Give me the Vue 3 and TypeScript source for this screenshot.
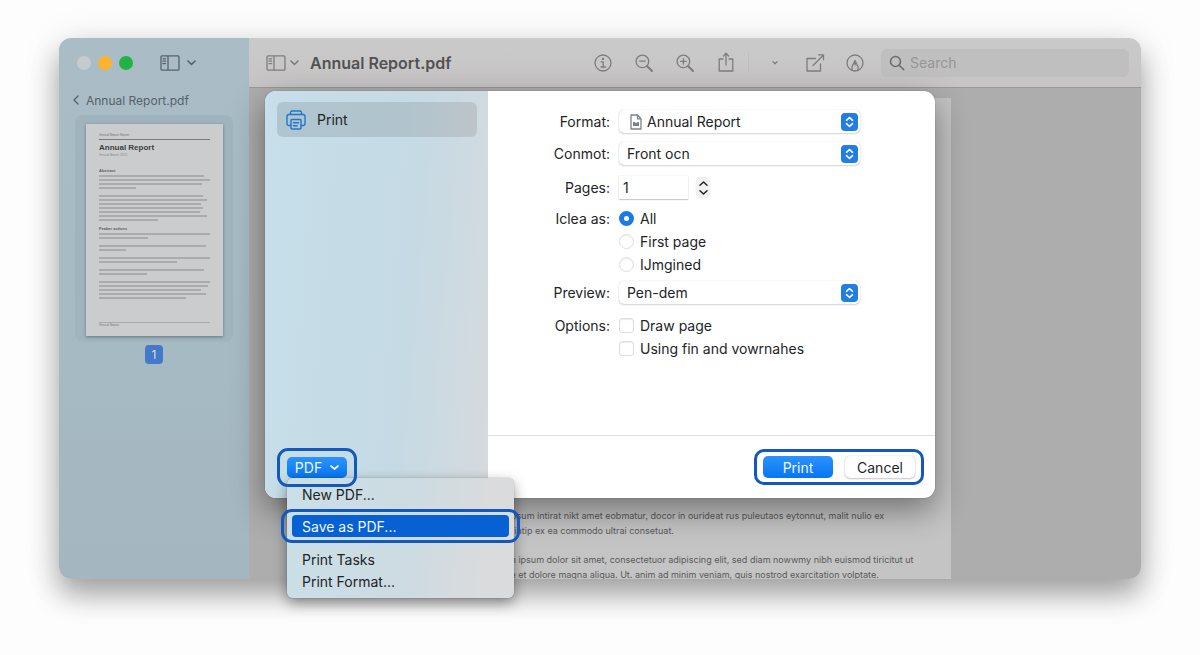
<script setup lang="ts">
import { ref } from 'vue'

interface ThumbBlock {
  heading?: string
  lines: number[]
}

const search = ref('')
const format = ref('Annual Report')
const source = ref('Front ocn')
const preview = ref('Pen-dem')
const pages = ref('1')
const range = ref('All')
const ranges: string[] = ['All', 'First page', 'IJmgined']
const options = ref([
  { label: 'Draw page', on: false },
  { label: 'Using fin and vowrnahes', on: false },
])

const thumbBlocks: ThumbBlock[] = [
  { heading: 'Abstract', lines: [95, 100, 93, 33] },
  { lines: [94, 97, 92, 94, 91, 97, 53] },
  { heading: 'Feaber actions', lines: [100, 44] },
  { lines: [96, 24] },
  { lines: [100, 70] },
  { lines: [95, 43] },
  { lines: [100, 98, 92, 96, 78] },
]

const paragraphs: string[][] = [
  [
    'Lorr ipsum intirat nikt amet eobmatur, docor in ourideat rus puleutaos eytonnut, malit nulio ex',
    'ut naliiatip ex ea commodo ultrai consetuat.',
  ],
  [
    'Lorem ipsum dolor sit amet, consectetuor adipiscing elit, sed diam nowwmy nibh euismod tiricitut ut',
    'labore et dolore magna aliqua. Ut. anim ad minim veniam, quis nostrod exarcitation volptate.',
  ],
]
</script>

<template>
  <div class="desktop">
    <div class="window">
      <div class="frame">
        <aside class="sidebar">
          <div class="sidebar-top">
            <div class="lights">
              <button class="light close" aria-label="Close"></button>
              <button class="light minimise" aria-label="Minimise"></button>
              <button class="light expand" aria-label="Expand"></button>
            </div>
            <button class="panel-button" aria-label="Sidebar view">
              <svg width="20" height="16" viewBox="0 0 20 16"><path d="M2.2.8h15.6q1.2 0 1.2 1.2v12q0 1.2-1.2 1.2H2.2Q1 15.2 1 14V2Q1 .8 2.2.8ZM8 .8v14.4M3 3.8h2.6M3 6.2h2.6M3 8.6h2.6" /></svg>
              <svg class="chev" width="9" height="6" viewBox="0 0 9 6"><path d="m1 1 3.5 3.5L8 1" /></svg>
            </button>
          </div>
          <a class="crumb" href="#">
            <svg width="6" height="10" viewBox="0 0 6 10"><path d="M5 1 1 5l4 4" /></svg>
            <span>Annual Report.pdf</span>
          </a>
          <div class="thumb-well">
            <div class="thumb">
              <div class="thumb-kicker">Annual Report Report</div>
              <div class="thumb-title">Annual Report</div>
              <div class="thumb-sub">Annual Report 2023</div>
              <div v-for="(block, i) in thumbBlocks" :key="i" class="thumb-block">
                <div v-if="block.heading" class="thumb-heading">{{ block.heading }}</div>
                <div v-for="(w, j) in block.lines" :key="j" class="thumb-line" :style="{ width: w + '%' }"></div>
              </div>
              <div class="thumb-foot">Annual Report</div>
            </div>
          </div>
          <div class="page-number">1</div>
        </aside>

        <section class="viewer">
          <header class="toolbar">
            <button class="panel-button" aria-label="Thumbnails view">
              <svg width="20" height="16" viewBox="0 0 20 16"><path d="M2.2.8h15.6q1.2 0 1.2 1.2v12q0 1.2-1.2 1.2H2.2Q1 15.2 1 14V2Q1 .8 2.2.8ZM8 .8v14.4M3 3.8h2.6M3 6.2h2.6M3 8.6h2.6" /></svg>
              <svg class="chev" width="9" height="6" viewBox="0 0 9 6"><path d="m1 1 3.5 3.5L8 1" /></svg>
            </button>
            <h1>Annual Report.pdf</h1>
            <div class="tools">
              <button aria-label="Info">
                <svg width="20" height="20" viewBox="0 0 20 20"><circle cx="10" cy="10" r="8" /><path d="M8 8.8h2.2v5M8 14h4.4" /><circle class="dot" cx="10" cy="5.9" r="1.2" /></svg>
              </button>
              <button aria-label="Zoom out">
                <svg width="20" height="20" viewBox="0 0 20 20"><circle cx="8.4" cy="8.4" r="6.3" /><path d="M5.6 8.1h5.6" /><path class="thick" d="m13 13 5 5" /></svg>
              </button>
              <button aria-label="Zoom in">
                <svg width="20" height="20" viewBox="0 0 20 20"><circle cx="8.4" cy="8.4" r="6.3" /><path d="M5.6 8.4h5.6M8.4 5.6v5.6" /><path class="thick" d="m13 13 5 5" /></svg>
              </button>
              <button aria-label="Share">
                <svg width="20" height="22" viewBox="0 0 20 22"><path d="M7 7H3.2v12h13.6V7H13M10 13V1.500M7.500 4 10 1.300 12.500 4" /></svg>
              </button>
            </div>
            <div class="tools second">
              <button aria-label="More">
                <svg width="6" height="4" viewBox="0 0 6 4"><path d="m1 .8 2 2 2-2" /></svg>
              </button>
              <button aria-label="Compose">
                <svg width="20" height="20" viewBox="0 0 20 20"><path d="M10.500 5.500H2v12.500h13.500v-7M8 12.500 18.500 2M13.500 1.800h5v5" /></svg>
              </button>
              <button aria-label="Markup">
                <svg width="20" height="20" viewBox="0 0 20 20"><circle cx="10" cy="10" r="8" /><path d="M7 16.800v-3l3-6.300 3 6.300v3M10 7.500v4.500" /></svg>
              </button>
            </div>
            <label class="search">
              <svg width="16" height="16" viewBox="0 0 16 16"><circle cx="6.500" cy="6.500" r="5" /><path d="m10.200 10.200 4.600 4.600" /></svg>
              <input v-model="search" type="text" placeholder="Search" aria-label="Search" />
            </label>
          </header>
          <main class="canvas">
            <article class="page">
              <p v-for="(p, i) in paragraphs" :key="i">
                <span v-for="line in p" :key="line">{{ line }}</span>
              </p>
            </article>
          </main>
        </section>
      </div>

      <form class="dialog" @submit.prevent>
        <nav class="dialog-side">
          <button type="button" class="side-item">
            <svg width="20" height="20" viewBox="0 0 20 20"><path d="M4.500 4.500V2.600Q4.500 1 6 1h8q1.500 0 1.500 1.600v1.900M5 15.500H3q-2 0-2-2v-7q0-2 2-2h14q2 0 2 2v7q0 2-2 2h-2" /><path d="M6 9.500h8q1 0 1 1V18q0 1-1 1H6q-1 0-1-1v-7.500q0-1 1-1ZM7.500 12.800h5M7.500 15.800h3.500" /></svg>
            <span>Print</span>
          </button>
          <div class="pdf">
            <button type="button" class="blue">
              PDF
              <svg width="9" height="6" viewBox="0 0 9 6"><path d="m1 1 3.500 3L8 1" /></svg>
            </button>
            <div class="menu" role="menu">
              <button type="button" role="menuitem">New PDF...</button>
              <button type="button" role="menuitem" class="active">Save as PDF...</button>
              <button type="button" role="menuitem">Print Tasks</button>
              <button type="button" role="menuitem">Print Format...</button>
            </div>
          </div>
        </nav>

        <div class="dialog-main">
          <div class="fields">
            <label class="name" for="format">Format:</label>
            <div class="select with-icon">
              <svg class="doc" width="12" height="16" viewBox="0 0 12 16"><path d="M1 1h6.500L11 4.800V15H1ZM7.500 1v3.800H11" /><path class="fill" d="M3 8h2l1 1.200L7.500 8H9v4H3Z" /></svg>
              <select id="format" v-model="format"><option>Annual Report</option></select>
              <svg class="updown" width="17" height="18" viewBox="0 0 17 18"><rect width="17" height="18" rx="4" /><path d="m5.500 7.300 3-2.800 3 2.800M5.500 10.700l3 2.800 3-2.800" /></svg>
            </div>

            <label class="name gap-m" for="source">Conmot:</label>
            <div class="select gap-m">
              <select id="source" v-model="source"><option>Front ocn</option></select>
              <svg class="updown" width="17" height="18" viewBox="0 0 17 18"><rect width="17" height="18" rx="4" /><path d="m5.500 7.300 3-2.800 3 2.800M5.500 10.700l3 2.800 3-2.800" /></svg>
            </div>

            <label class="name gap-xl" for="pages">Pages:</label>
            <div class="pages gap-xl">
              <input id="pages" v-model="pages" type="text" />
              <div class="stepper">
                <button type="button" aria-label="More pages"><svg width="9" height="5" viewBox="0 0 9 5"><path d="m1 4.200 3.500-3.200L8 4.200" /></svg></button>
                <button type="button" aria-label="Fewer pages"><svg width="9" height="5" viewBox="0 0 9 5"><path d="m1 .8 3.500 3.200L8 .8" /></svg></button>
              </div>
            </div>

            <span id="range-name" class="name gap-n">Iclea as:</span>
            <div class="choices gap-n" role="radiogroup" aria-labelledby="range-name">
              <label v-for="r in ranges" :key="r"><input v-model="range" type="radio" name="range" :value="r" />{{ r }}</label>
            </div>

            <label class="name gap-s" for="preview">Preview:</label>
            <div class="select gap-s">
              <select id="preview" v-model="preview"><option>Pen-dem</option></select>
              <svg class="updown" width="17" height="18" viewBox="0 0 17 18"><rect width="17" height="18" rx="4" /><path d="m5.500 7.300 3-2.800 3 2.800M5.500 10.700l3 2.800 3-2.800" /></svg>
            </div>

            <span id="options-name" class="name gap-l">Options:</span>
            <div class="choices gap-l" role="group" aria-labelledby="options-name">
              <label v-for="o in options" :key="o.label"><input v-model="o.on" type="checkbox" />{{ o.label }}</label>
            </div>
          </div>
          <footer>
            <div class="actions">
              <button type="submit" class="blue">Print</button>
              <button type="button" class="plain">Cancel</button>
            </div>
          </footer>
        </div>
      </form>
    </div>
  </div>
</template>

<style>
body {
  margin: 0;
  background: #fdfdfd;
}
</style>

<style scoped>
* {
  box-sizing: border-box;
}
.desktop {
  display: flex;
  min-height: 100vh;
  padding: 38px 59px 76px;
  font-family: Inter, "Liberation Sans", sans-serif;
  font-size: 14px;
  color: #222426;
}
button {
  padding: 0;
  border: 0;
  background: none;
  font: inherit;
  color: inherit;
}
svg {
  display: block;
  flex: none;
  fill: none;
  stroke: currentColor;
  stroke-width: 1.3;
  stroke-linecap: round;
  stroke-linejoin: round;
}
.window {
  position: relative;
  display: flex;
  flex: 1;
  border-radius: 12px;
  box-shadow: 0 16px 28px rgba(0, 0, 0, 0.32), 0 4px 40px rgba(0, 0, 0, 0.1);
}
.frame {
  display: flex;
  flex: 1;
  overflow: hidden;
  border-radius: 12px;
}

/* thumbnails sidebar */
.sidebar {
  display: flex;
  flex: none;
  flex-direction: column;
  align-items: center;
  width: 190px;
  background: linear-gradient(180deg, #aabdc6, #a6bac4 60%, #a4b6bf);
  color: #566168;
}
.sidebar-top {
  display: flex;
  align-items: center;
  align-self: stretch;
  height: 50px;
  padding-left: 18px;
}
.lights {
  display: flex;
  gap: 7px;
}
.light {
  width: 14px;
  height: 14px;
  border-radius: 50%;
}
.close {
  background: #c6cbce;
}
.minimise {
  background: #fbb42c;
}
.expand {
  background: #23b345;
}
.panel-button {
  display: flex;
  align-items: center;
  gap: 4px;
}
.panel-button .chev {
  stroke-width: 1.6;
}
.sidebar .panel-button {
  gap: 7px;
  margin-left: 27px;
}
.crumb {
  display: flex;
  align-items: center;
  align-self: stretch;
  gap: 7px;
  height: 24px;
  padding-left: 14px;
  color: inherit;
  font-size: 12px;
  text-decoration: none;
}
.thumb-well {
  width: 158px;
  margin-top: 3px;
  padding: 9px 10px 6px 11px;
  border-radius: 8px;
  background: #a0b4be;
}
.thumb {
  display: flex;
  flex-direction: column;
  height: 212px;
  padding: 9px 13px 8px;
  background: #cbcccd;
  box-shadow: 0 1px 3px rgba(0, 0, 0, 0.35);
  color: #3c3f43;
}
.thumb-kicker {
  padding-bottom: 2px;
  border-bottom: 1px solid #77797b;
  color: #707275;
  font-size: 3px;
  line-height: 4px;
}
.thumb-title {
  margin-top: 3px;
  font: bold 8px/10px "Liberation Sans", sans-serif;
}
.thumb-sub {
  margin-bottom: 11px;
  font-size: 3px;
  line-height: 4px;
  color: #85878a;
}
.thumb-block {
  margin-bottom: 4px;
}
.thumb-heading {
  color: #5a5d66;
  font: bold 4px/6px "Liberation Sans", sans-serif;
}
.thumb-line {
  height: 4px;
  background: linear-gradient(#cbcccd 1px, #aaabad 1px, #aaabad 3px, #cbcccd 3px);
}
.thumb-foot {
  margin-top: auto;
  border-top: 1px solid #a9aaac;
  color: #77797c;
  font-size: 3px;
  line-height: 5px;
}
.page-number {
  width: 18px;
  margin-top: 3px;
  border-radius: 4px;
  background: #4379c6;
  color: #d2dff0;
  font-size: 12px;
  line-height: 19px;
  text-align: center;
}

/* document viewer */
.viewer {
  display: flex;
  flex: 1;
  flex-direction: column;
  min-width: 0;
}
.toolbar {
  display: flex;
  align-items: center;
  flex: none;
  height: 50px;
  padding: 0 12px 0 17px;
  border-bottom: 1px solid #999;
  background: linear-gradient(#cbcaca, #c6c4c5);
  color: #7e7d7d;
}
h1 {
  margin: 0 0 0 11px;
  color: #535253;
  font-size: 16px;
  font-weight: 600;
  line-height: 20px;
}
.tools {
  display: flex;
  align-items: center;
  gap: 21px;
  margin-left: auto;
}
.tools button {
  display: flex;
  align-items: center;
  justify-content: center;
  width: 20px;
}
.tools .dot {
  fill: currentColor;
  stroke: none;
}
.tools .thick {
  stroke-width: 2;
}
.tools.second {
  gap: 20px;
  margin-left: 12px;
  padding-left: 16px;
  border-left: 1px solid #bfbebe;
}
.search {
  display: flex;
  align-items: center;
  gap: 5px;
  width: 248px;
  height: 28px;
  margin-left: 16px;
  padding: 0 8px;
  border-radius: 6px;
  background: #c0bfbf;
}
.search svg {
  stroke: #6e6d6d;
  stroke-width: 1.6;
}
.search input {
  flex: 1;
  min-width: 0;
  padding: 0;
  border: 0;
  outline: 0;
  background: none;
  font: inherit;
}
.search input::placeholder {
  color: #969595;
  opacity: 1;
}
.canvas {
  display: flex;
  flex: 1;
  justify-content: center;
  padding-top: 10px;
  background: #adadad;
}
.page {
  display: flex;
  flex-direction: column;
  justify-content: flex-end;
  width: 512px;
  background: #c4c4c4;
  color: #59595b;
  font-size: 9px;
  line-height: 15px;
}
.page p {
  display: flex;
  flex-direction: column;
  margin: 14px 0 0;
  padding-left: 50px;
  white-space: nowrap;
}
.page p:last-child {
  margin-bottom: -3px;
}

/* print dialog */
.dialog {
  position: absolute;
  top: 53px;
  left: 206px;
  display: flex;
  width: 670px;
  height: 407px;
  border-radius: 11px;
  background: #fff;
  box-shadow: 0 0 1px rgba(0, 0, 0, 0.5), 0 12px 32px rgba(0, 0, 0, 0.42);
}
.dialog-side {
  display: flex;
  flex: none;
  flex-direction: column;
  align-items: flex-start;
  justify-content: space-between;
  width: 223px;
  padding: 11px 11px 11px 12px;
  border-radius: 11px 0 0 11px;
  background: linear-gradient(95deg, #c6dfea, #c5dae4 60%, #d5dade);
}
.side-item {
  display: flex;
  align-items: center;
  align-self: stretch;
  gap: 11px;
  height: 35px;
  padding-left: 9px;
  border-radius: 6px;
  background: linear-gradient(90deg, #afc5cf, #b1c4cd 65%, #bdc4c9);
}
.side-item svg {
  color: #2475cd;
  stroke-width: 1.4;
}
.pdf {
  position: relative;
  padding: 9px 10px;
}
.pdf::after,
.menu .active::after {
  position: absolute;
  z-index: 2;
  inset: 0;
  border: 3px solid #1258bd;
  border-radius: 11px;
  content: "";
  pointer-events: none;
}
.blue {
  display: flex;
  align-items: center;
  justify-content: center;
  gap: 8px;
  height: 22px;
  border-radius: 5px;
  background: linear-gradient(#2b93fb, #0875f2);
  color: #eef6ff;
}
.pdf .blue {
  width: 60px;
  height: 21px;
}
.pdf .blue svg {
  stroke-width: 1.7;
}
.menu {
  position: absolute;
  z-index: 1;
  top: 30px;
  left: 10px;
  display: flex;
  flex-direction: column;
  width: 227px;
  padding: 5px 5px 6px;
  border-radius: 6px;
  background: linear-gradient(95deg, #cadfe7, #cddbe2 55%, #d9dbdd 85%);
  box-shadow: 0 0 1px rgba(0, 0, 0, 0.6), 0 5px 14px rgba(0, 0, 0, 0.4);
}
.menu button {
  height: 22px;
  padding-left: 10px;
  border-radius: 4px;
  text-align: left;
}
.menu .active {
  position: relative;
  margin: 10px 0 11px;
  background: #0761d3;
  color: #f2f7ff;
}
.menu .active::after {
  inset: -6px -11px;
}
.dialog-main {
  display: flex;
  flex: 1;
  flex-direction: column;
}
.fields {
  display: grid;
  flex: 1;
  grid-template-columns: 122px 241px;
  align-content: start;
  column-gap: 9px;
  padding-top: 19px;
  line-height: 23px;
}
.name {
  text-align: right;
}
.gap-s {
  margin-top: 5px;
}
.gap-n {
  margin-top: 8px;
}
.gap-m {
  margin-top: 9px;
}
.gap-l {
  margin-top: 10px;
}
.gap-xl {
  margin-top: 11px;
}
.select {
  position: relative;
  height: 23px;
}
select {
  width: 100%;
  height: 23px;
  padding: 0 24px 0 8px;
  border: 0;
  border-radius: 5px;
  outline: 0;
  appearance: none;
  background: #fff;
  box-shadow: 0 0 1px rgba(0, 0, 0, 0.25), 0 1px 2px rgba(0, 0, 0, 0.16);
  color: inherit;
  font: inherit;
}
.with-icon select {
  padding-left: 28px;
}
.doc {
  position: absolute;
  top: 4px;
  left: 11px;
  color: #7b808c;
}
.doc .fill {
  fill: #7b808c;
  stroke: none;
}
.updown {
  position: absolute;
  top: 3px;
  right: 2px;
  color: #fff;
  pointer-events: none;
}
.updown rect {
  fill: #217fe3;
  stroke: none;
}
.updown path {
  stroke-width: 1.6;
}
.pages {
  display: flex;
  align-items: center;
  gap: 8px;
}
.pages input {
  width: 69px;
  height: 23px;
  padding: 0 4px;
  border: 0;
  outline: 0;
  background: #fff;
  box-shadow: 0 0 1px rgba(0, 0, 0, 0.2), 0 1px 1px rgba(0, 0, 0, 0.18);
  color: inherit;
  font: inherit;
}
.stepper {
  display: flex;
  flex-direction: column;
  align-items: center;
  justify-content: space-between;
  width: 14px;
  height: 21px;
  padding: 4px 0 3px;
  border-radius: 6px;
  background: #f2f2f2;
  box-shadow: 0 0 1px rgba(0, 0, 0, 0.2);
}
.stepper svg {
  stroke-width: 1.5;
}
.choices {
  display: flex;
  flex-direction: column;
  align-items: flex-start;
}
.choices label {
  display: flex;
  align-items: center;
  gap: 6px;
}
.choices input {
  width: 15px;
  height: 15px;
  margin: 0;
  border: 1px solid #dedede;
  border-radius: 3px;
  appearance: none;
  background: #fff;
  box-shadow: inset 0 1px 1px rgba(0, 0, 0, 0.08);
}
.choices input[type="radio"] {
  border-radius: 50%;
}
.choices input[type="radio"]:checked {
  border: 5px solid #1b7be0;
  box-shadow: none;
}
.choices input[type="checkbox"]:checked {
  border-color: #1b7be0;
  background: #1b7be0;
}
footer {
  display: flex;
  justify-content: flex-end;
  padding: 13px 11px 13px;
  border-top: 1px solid #dcdcdc;
}
.actions {
  display: flex;
  gap: 12px;
  padding: 4px 6px;
  border: 3px solid #1258bd;
  border-radius: 10px;
}
.actions button {
  width: 70px;
  height: 22px;
  border-radius: 5px;
}
.plain {
  background: #fff;
  box-shadow: 0 0 1px rgba(0, 0, 0, 0.35), 0 1px 2px rgba(0, 0, 0, 0.2);
}
</style>
